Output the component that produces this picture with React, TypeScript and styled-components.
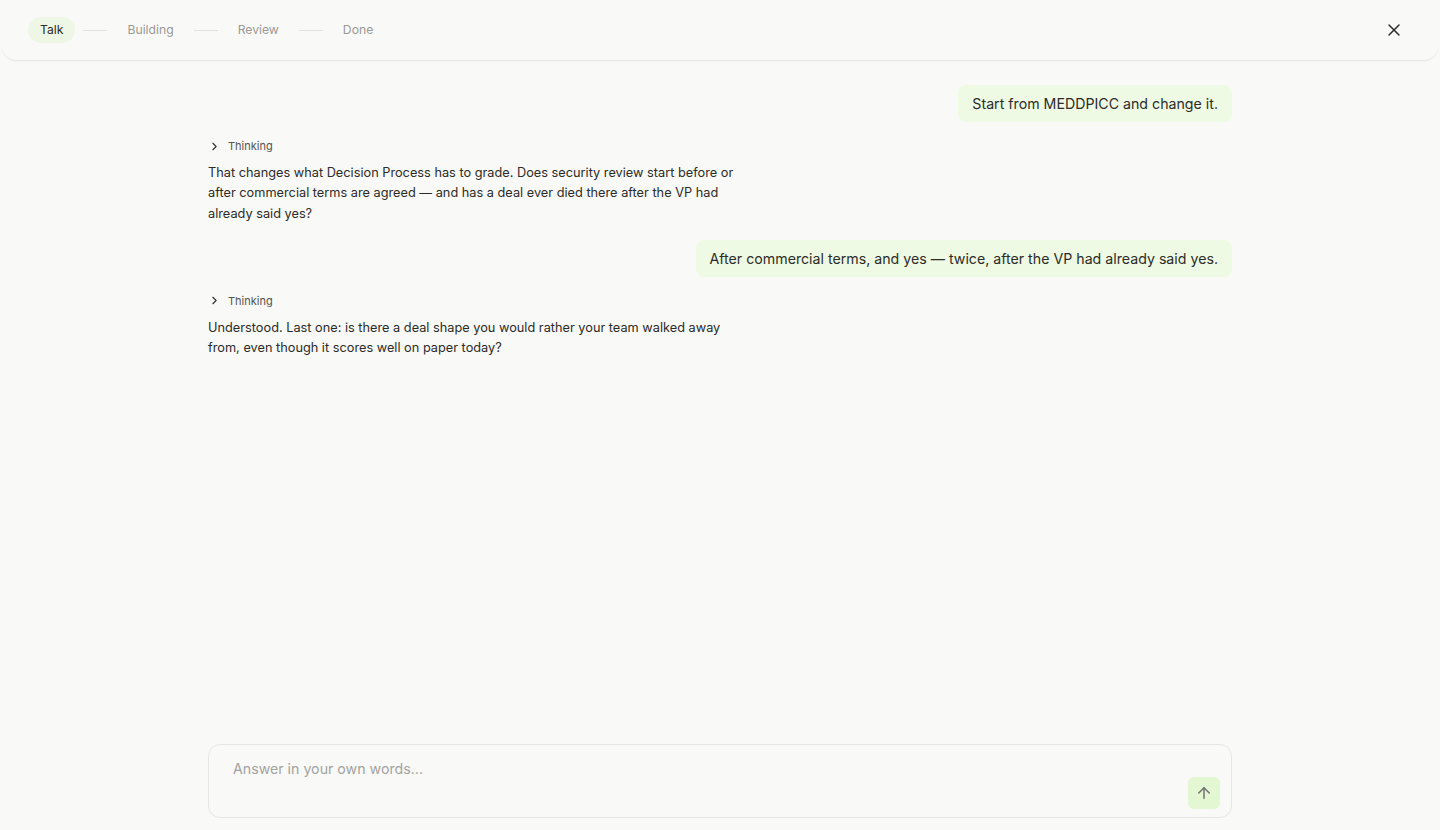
import React, { useState } from 'react';
import styled, { createGlobalStyle } from 'styled-components';
import { ArrowUp, ChevronRight, X } from 'lucide-react';

type Step = { label: string };
type Message =
  | { role: 'user'; text: string }
  | { role: 'assistant'; text: string };

const steps: Step[] = [{ label: 'Talk' }, { label: 'Building' }, { label: 'Review' }, { label: 'Done' }];

const messages: Message[] = [
  { role: 'user', text: 'Start from MEDDPICC and change it.' },
  {
    role: 'assistant',
    text: 'That changes what Decision Process has to grade. Does security review start before or after commercial terms are agreed — and has a deal ever died there after the VP had already said yes?',
  },
  { role: 'user', text: 'After commercial terms, and yes — twice, after the VP had already said yes.' },
  {
    role: 'assistant',
    text: 'Understood. Last one: is there a deal shape you would rather your team walked away from, even though it scores well on paper today?',
  },
];

const Interview = () => {
  const [answer, setAnswer] = useState('');
  const current = 0;

  return (
    <>
      <GlobalStyle />
      <Page>
        <TopBar>
          <Stepper>
            {steps.map((step, i) => (
              <React.Fragment key={step.label}>
                {i > 0 && <StepLine />}
                <StepPill $active={i === current}>{step.label}</StepPill>
              </React.Fragment>
            ))}
          </Stepper>
          <CloseButton aria-label="Close">
            <X size={20} strokeWidth={1.75} />
          </CloseButton>
        </TopBar>

        <Thread>
          <Column>
            {messages.map((m, i) =>
              m.role === 'user' ? (
                <UserRow key={i}>
                  <UserBubble>{m.text}</UserBubble>
                </UserRow>
              ) : (
                <Reply key={i}>
                  <ThinkingToggle>
                    <ChevronRight size={13} strokeWidth={2} />
                    Thinking
                  </ThinkingToggle>
                  <ReplyText>{m.text}</ReplyText>
                </Reply>
              )
            )}
          </Column>
        </Thread>

        <ComposerWrap>
          <Composer>
            <AnswerInput
              placeholder="Answer in your own words..."
              value={answer}
              onChange={(e) => setAnswer(e.target.value)}
            />
            <SendRow>
              <SendButton aria-label="Send">
                <ArrowUp size={18} strokeWidth={2} />
              </SendButton>
            </SendRow>
          </Composer>
        </ComposerWrap>
      </Page>
    </>
  );
};

const GlobalStyle = createGlobalStyle`
  html, body, #root {
    height: 100%;
  }

  body {
    margin: 0;
    background: #f9f9f7;
    color: #2c2c2a;
    font-family: Inter, "Noto Sans", sans-serif;
    -webkit-font-smoothing: antialiased;
  }

  * {
    box-sizing: border-box;
  }
`;

const Page = styled.div`
  display: flex;
  flex-direction: column;
  height: 100vh;
  overflow: hidden;
`;

const TopBar = styled.header`
  align-items: center;
  background: #f9f9f7;
  border-bottom: 1px solid #e8e8e4;
  border-radius: 0 0 14px 14px;
  box-shadow: 0 1px 2px rgba(0, 0, 0, 0.02);
  display: flex;
  flex-shrink: 0;
  height: 61px;
  justify-content: space-between;
  margin: 0 2px;
  padding: 0 28px 0 26px;
`;

const Stepper = styled.nav`
  align-items: center;
  display: flex;
  gap: 8px;
`;

const StepPill = styled.span<{ $active: boolean }>`
  background: ${(p) => (p.$active ? '#eef7e6' : 'transparent')};
  border-radius: 999px;
  color: ${(p) => (p.$active ? '#2c2c2a' : '#9a9a96')};
  font-size: 12.2px;
  line-height: 26px;
  padding: 0 12px;
`;

const StepLine = styled.span`
  background: #e2e2de;
  height: 1px;
  width: 24px;
`;

const CloseButton = styled.button`
  align-items: center;
  background: none;
  border: 0;
  color: #2c2c2a;
  cursor: pointer;
  display: flex;
  height: 32px;
  justify-content: center;
  padding: 0;
  width: 32px;
`;

const Thread = styled.main`
  flex: 1;
  overflow-y: auto;
  padding: 24px 0;
`;

const Column = styled.div`
  display: flex;
  flex-direction: column;
  gap: 16px;
  margin: 0 auto;
  max-width: 1024px;
`;

const UserRow = styled.div`
  display: flex;
  justify-content: flex-end;
`;

const UserBubble = styled.div`
  background: #eefae3;
  border-radius: 8px;
  color: #2c2c2a;
  font-size: 14.2px;
  line-height: 21px;
  padding: 8px 14px;
`;

const Reply = styled.div`
  display: flex;
  flex-direction: column;
  gap: 8px;
`;

const ThinkingToggle = styled.button`
  align-items: center;
  align-self: flex-start;
  background: none;
  border: 0;
  color: #555552;
  cursor: pointer;
  display: flex;
  font-family: inherit;
  font-size: 11px;
  gap: 7px;
  height: 16px;
  padding: 0;

  svg {
    color: #2c2c2a;
  }
`;

const ReplyText = styled.p`
  font-size: 12.75px;
  line-height: 20.3px;
  margin: 1px 0 0;
  max-width: 532px;
`;

const ComposerWrap = styled.div`
  flex-shrink: 0;
  padding: 0 0 12px;
`;

const Composer = styled.div`
  border: 1px solid #e6e6e2;
  border-radius: 12px;
  display: flex;
  flex-direction: column;
  height: 74px;
  margin: 0 auto;
  max-width: 1024px;
  padding: 13px 11px 8px 24px;
`;

const AnswerInput = styled.textarea`
  background: none;
  border: 0;
  color: #2c2c2a;
  flex: 1;
  font-family: inherit;
  font-size: 14.2px;
  line-height: 21px;
  outline: none;
  padding: 0;
  resize: none;

  &::placeholder {
    color: #a3a3a0;
  }
`;

const SendRow = styled.div`
  display: flex;
  justify-content: flex-end;
`;

const SendButton = styled.button`
  align-items: center;
  background: #e2f7d2;
  border: 0;
  border-radius: 6px;
  color: #727270;
  cursor: pointer;
  display: flex;
  height: 32px;
  justify-content: center;
  padding: 0;
  width: 32px;
`;

export default Interview;
